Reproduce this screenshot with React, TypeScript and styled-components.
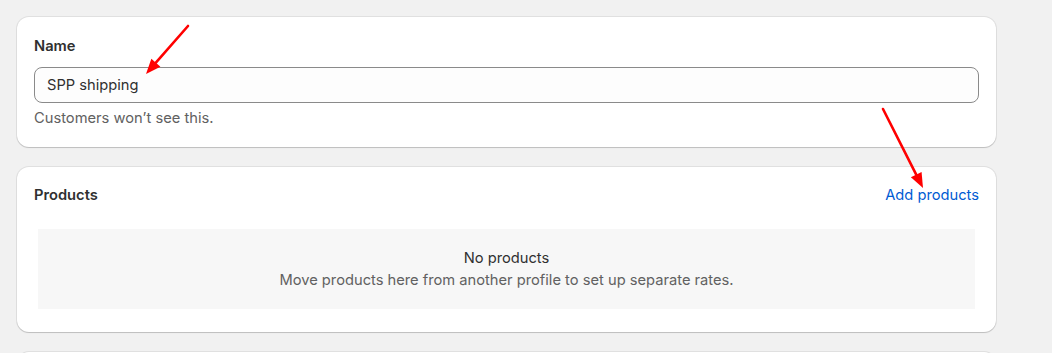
import styled, { createGlobalStyle } from 'styled-components';

const GlobalStyle = createGlobalStyle`
body {
  margin: 0;
  background: #f1f1f1;
  font-family: Inter, "Noto Sans", sans-serif;
  color: #303030;
  -webkit-font-smoothing: antialiased;
}
`;

const Page = styled.div`
position: relative;
width: 979px;
padding: 17px 0 0 17px;
display: flex;
flex-direction: column;
gap: 20px;
`;

const Card = styled.div<{ $top?: number; $minHeight?: number }>`
background: #ffffff;
border-radius: 12px;
padding: ${(props) => props.$top ?? 18}px 17px 18px;
min-height: ${(props) => props.$minHeight ? `${props.$minHeight}px` : 'auto'};
box-shadow: 0 0 0 1px rgba(0, 0, 0, 0.07), 0 1px 1px 0 rgba(0, 0, 0, 0.15);
`;

const Label = styled.div`
font-size: 14.7px;
line-height: 22px;
font-weight: 600;
color: #303030;
`;

const Input = styled.input`
display: block;
box-sizing: border-box;
width: 100%;
height: 36px;
margin-top: 10px;
padding: 0 12px;
font-family: Inter, "Noto Sans", sans-serif;
font-size: 14.7px;
color: #303030;
background: #fdfdfd;
border: 1px solid #8a8a8a;
border-radius: 8px;
outline: none;
`;

const Help = styled.div`
margin-top: 4px;
font-size: 14.7px;
line-height: 22px;
color: #616161;
`;

const Header = styled.div`
display: flex;
justify-content: space-between;
align-items: center;
`;

const LinkButton = styled.a`
font-size: 14.7px;
line-height: 22px;
color: #005bd3;
cursor: pointer;
`;

const EmptyBox = styled.div`
margin: 23px 4px 5px;
padding: 18px 0;
background: #f7f7f7;
text-align: center;
font-size: 14.7px;
line-height: 22px;
`;

const EmptyTitle = styled.div`
color: #303030;
`;

const EmptyText = styled.div`
color: #616161;
`;

const Overlay = styled.svg`
position: absolute;
left: 0;
top: 0;
width: 1052px;
height: 353px;
pointer-events: none;
`;

const Arrow = ({ x1, y1, x2, y2 }: { x1: number; y1: number; x2: number; y2: number }) => {
    const a = Math.atan2(y2 - y1, x2 - x1);
    const len = 15;
    const w = 6;
    const bx = x2 - len * Math.cos(a);
    const by = y2 - len * Math.sin(a);
    const px = -Math.sin(a) * w;
    const py = Math.cos(a) * w;
    return (
        <g>
            <line x1={x1} y1={y1} x2={bx} y2={by} stroke="#ff0000" strokeWidth={2.6} strokeLinecap="round" />
            <polygon points={`${x2},${y2} ${bx + px},${by + py} ${bx - px},${by - py}`} fill="#ff0000" />
        </g>
    );
};

export default function App() {
    return (
        <>
            <GlobalStyle />
            <Page>
                <Card>
                    <Label>Name</Label>
                    <Input defaultValue="SPP shipping" />
                    <Help>Customers won’t see this.</Help>
                </Card>
                <Card $top={17}>
                    <Header>
                        <Label>Products</Label>
                        <LinkButton>Add products</LinkButton>
                    </Header>
                    <EmptyBox>
                        <EmptyTitle>No products</EmptyTitle>
                        <EmptyText>Move products here from another profile to set up separate rates.</EmptyText>
                    </EmptyBox>
                </Card>
                <Card $minHeight={60} />
            </Page>
            <Overlay>
                <Arrow x1={188} y1={26} x2={146} y2={74} />
                <Arrow x1={883} y1={109} x2={923} y2={188} />
            </Overlay>
        </>
    );
}
